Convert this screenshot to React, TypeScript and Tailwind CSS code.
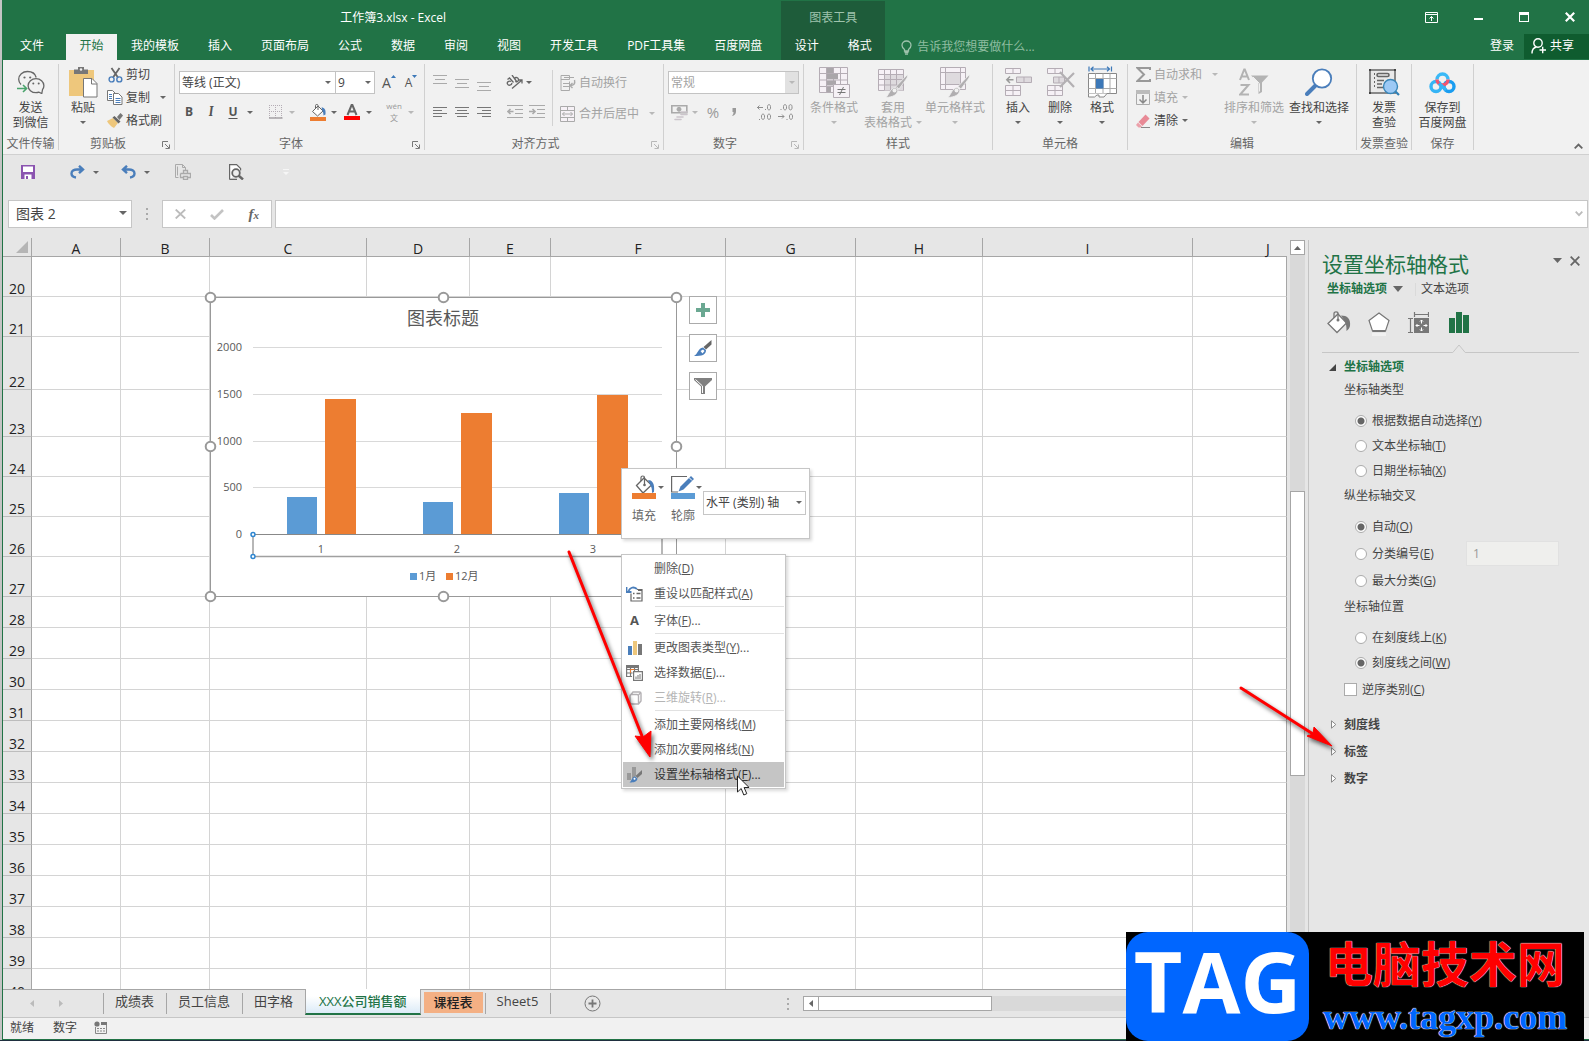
import { useState } from 'react'
import type { ReactNode } from 'react'

const TABS = ['我的模板', '插入', '页面布局', '公式', '数据', '审阅', '视图', '开发工具', 'PDF工具集', '百度网盘']

const COLUMNS = [
  { name: 'A', width: 89 },
  { name: 'B', width: 89 },
  { name: 'C', width: 157 },
  { name: 'D', width: 103 },
  { name: 'E', width: 81 },
  { name: 'F', width: 175 },
  { name: 'G', width: 130 },
  { name: 'H', width: 127 },
  { name: 'I', width: 210 },
]

const ROWS = [
  { n: 20, h: 40 }, { n: 21, h: 40 }, { n: 22, h: 53 }, { n: 23, h: 47 },
  { n: 24, h: 40 }, { n: 25, h: 40 }, { n: 26, h: 40 }, { n: 27, h: 40 },
  { n: 28, h: 31 }, { n: 29, h: 31 }, { n: 30, h: 31 }, { n: 31, h: 31 },
  { n: 32, h: 31 }, { n: 33, h: 31 }, { n: 34, h: 31 }, { n: 35, h: 31 },
  { n: 36, h: 31 }, { n: 37, h: 31 }, { n: 38, h: 31 }, { n: 39, h: 31 },
  { n: 40, h: 31 },
]

const BARS = [
  { x: 87, top: 210, w: 30, fill: '#5b9bd5' },
  { x: 125, top: 112, w: 31, fill: '#ed7d31' },
  { x: 223, top: 215, w: 30, fill: '#5b9bd5' },
  { x: 261, top: 126, w: 31, fill: '#ed7d31' },
  { x: 359, top: 206, w: 30, fill: '#5b9bd5' },
  { x: 397, top: 108, w: 31, fill: '#ed7d31' },
]

/* ---------- small pieces ---------- */

function Caret({ dim, className = '' }: { dim?: boolean; className?: string }) {
  return (
    <svg width="6" height="3" viewBox="0 0 6 3" className={`shrink-0 ${className}`} aria-hidden="true">
      <path d="M0 0h6L3 3z" fill={dim ? '#b8b8b8' : '#666'} />
    </svg>
  )
}

function Sep() {
  return <span className="h-[21px] w-px shrink-0 bg-[#d2d2d2]" />
}

function Tool({ label, w, children, disabled }: { label: string; w: string; children: ReactNode; disabled?: boolean }) {
  return (
    <button aria-label={label} disabled={disabled} className={`flex h-[22px] shrink-0 items-center justify-center ${w}`}>
      {children}
    </button>
  )
}

function Group({ label, width, launcher, dimLauncher, children }: {
  label: string
  width: string
  launcher?: boolean
  dimLauncher?: boolean
  children: ReactNode
}) {
  return (
    <section className={`flex h-[86px] shrink-0 flex-col border-r border-[#d0d0d0] ${width}`}>
      <div className="flex h-[72px]">{children}</div>
      <div className="flex h-[14px] items-end">
        <span className="flex-1 whitespace-nowrap text-center leading-[12px] text-[#666]">{label}</span>
        {launcher && (
          <button aria-label={`${label}设置`} className="flex w-[17px] justify-center pb-px">
            <svg width="8" height="8" viewBox="0 0 8 8" fill="none" stroke={dimLauncher ? '#b8b8b8' : '#777'}>
              <path d="M.5 6V.5H6M3 3l4 4M7.5 3.500v4h-4" />
            </svg>
          </button>
        )}
      </div>
    </section>
  )
}

function Big({ icon, line1, line2, caret, dim, w }: {
  icon: ReactNode
  line1: string
  line2?: string
  caret?: boolean
  dim?: boolean
  w: string
}) {
  return (
    <button disabled={dim} className={`flex shrink-0 flex-col items-center ${w} ${dim ? 'text-[#a3a3a3]' : 'text-[#444]'}`}>
      <span className="flex h-[36px] items-center">{icon}</span>
      <span className="whitespace-nowrap leading-[15px]">{line1}</span>
      <span className="flex h-[15px] items-center gap-1 whitespace-nowrap leading-[15px]">
        {line2}
        {caret && <Caret dim={dim} />}
      </span>
    </button>
  )
}

function Small({ icon, label, caret, dim, gap = 'ml-2' }: {
  icon: ReactNode
  label: string
  caret?: boolean
  dim?: boolean
  gap?: string
}) {
  return (
    <button disabled={dim} className={`flex h-[23px] items-center whitespace-nowrap ${dim ? 'text-[#a3a3a3]' : 'text-[#444]'}`}>
      <span className="mr-[3px] flex w-4 justify-center">{icon}</span>
      {label}
      {caret && <Caret dim={dim} className={gap} />}
    </button>
  )
}

/* ---------- icons ---------- */

function Lines({ rows, color }: { rows: [number, number, number][]; color: string }) {
  return (
    <svg width="14" height="16" viewBox="0 0 14 16" fill={color}>
      {rows.map(([x, y, w]) => <rect key={y} x={x} y={y} width={w} height="1" />)}
    </svg>
  )
}

function WechatIcon() {
  return (
    <svg width="28" height="24" viewBox="0 0 28 24" fill="none" stroke="#666" strokeWidth="1.3">
      <path d="M4 14.500C2.500 13 1.700 11.300 1.700 9.300 1.700 4.900 5.600 1.500 10.500 1.500c4.300 0 7.800 2.500 8.700 6" />
      <path d="M25.500 19.700c.9-1.200 1.400-2.500 1.400-4 0-3.900-3.500-7-7.900-7s-7.900 3.100-7.900 7 3.500 7 7.900 7c1 0 2-.2 2.900-.5l2.900 1.300z" fill="#f1f1f1" />
      <g fill="#666" stroke="none">
        <circle cx="7.500" cy="7.500" r="1.100" /><circle cx="13.200" cy="7.500" r="1.100" />
        <circle cx="16.300" cy="13.500" r="1" /><circle cx="21.700" cy="13.500" r="1" />
      </g>
      <path d="M0 18.500h9M6 15l3.600 3.500L6 22" stroke="#4aa36c" strokeWidth="1.6" />
    </svg>
  )
}

function PasteIcon() {
  return (
    <svg width="30" height="32" viewBox="0 0 30 32">
      <path d="M1 4h25v26H1z" fill="#eec77c" />
      <path d="M6 3.500h4V1h6v2.500h4V8H6z" fill="#777" />
      <circle cx="13" cy="3.500" r="1.200" fill="#f1f1f1" />
      <path d="M15.500 12.500h8.500l5 5v13.500H15.500z" fill="#fff" stroke="#777" />
      <path d="M23.500 12.500v5.500h5.500" fill="none" stroke="#777" />
    </svg>
  )
}

function CutIcon() {
  return (
    <svg width="15" height="16" viewBox="0 0 15 16" fill="none">
      <path d="M3.500 1l6.500 9.500M11.500 1L5 10.500" stroke="#666" strokeWidth="1.800" />
      <circle cx="3.600" cy="12.400" r="2.500" stroke="#4a7ebb" strokeWidth="1.400" />
      <circle cx="11.300" cy="12.400" r="2.500" stroke="#4a7ebb" strokeWidth="1.400" />
    </svg>
  )
}

function CopyIcon() {
  return (
    <svg width="16" height="15" viewBox="0 0 16 15" stroke="#777">
      <path d="M.5.500h5l2.500 2.500v7.500H.5z" fill="#fff" />
      <path d="M6.500 3.500h5l3.500 3.500v7.500H6.500z" fill="#fff" />
      <path d="M2 4.500h3M2 6.500h3M2 8.500h3M8.500 8.500h5M8.500 10.500h5M8.500 12.500h5" stroke="#4a7ebb" />
    </svg>
  )
}

function PainterIcon() {
  return (
    <svg width="16" height="15" viewBox="0 0 16 15">
      <path d="M0 8l6-3 5 5-4 5C4 13.500 1.500 11 0 8z" fill="#eec77c" />
      <path d="M5.500 4.500l2-1.500 6 5.500-2 2z" fill="#666" />
      <path d="M10 4l3.500-4L16 2.500 12.500 7z" fill="#777" />
    </svg>
  )
}

function Bucket() {
  return (
    <svg width="24" height="24" viewBox="0 0 24 24" fill="none">
      <path d="M4.500 10.500L12 3l7.500 7-8.500 8z" fill="#fff" stroke="#666" strokeWidth="1.300" />
      <path d="M9 6V2.500C9 .5 12.500.500 12.500 2.500V10" stroke="#666" strokeWidth="1.200" />
      <circle cx="12.500" cy="10" r="1.300" fill="#666" />
      <path d="M16 5c4 0 7 3 6 12l-2 1c0-4-.5-6-1.500-7.500z" fill="#4a7ebb" />
      <rect y="18" width="24" height="6" fill="#ed7d31" />
    </svg>
  )
}

function PaneBucket() {
  return (
    <svg width="24" height="23" viewBox="0 0 24 23" fill="none">
      <path d="M1 12.500L11 3l8.500 9-9.500 9.500z" fill="#fff" stroke="#777" strokeWidth="1.300" />
      <path d="M7 7V2.500C7 .3 11 .3 11 2.500V9" stroke="#777" strokeWidth="1.300" />
      <circle cx="11" cy="9" r="1.500" fill="#777" />
      <path d="M14 4.500c6 0 10 3 9 10.500-.5 2-2 4-3.500 5 0-5-.5-7.500-1.500-9.500z" fill="#777" />
    </svg>
  )
}

function MiniBucket() {
  return (
    <svg width="16" height="17" viewBox="0 0 16 17" fill="none">
      <path d="M2.500 7.500L8 2l5 5-5.500 5z" fill="#fff" stroke="#666" />
      <path d="M5.500 5V1.500c0-1.500 2.500-1.500 2.500 0V6" stroke="#666" />
      <path d="M11.500 3.500c3 0 4.500 2 4 7l-2 1c0-2-.3-3-1-4.500z" fill="#4a7ebb" />
      <rect y="13" width="16" height="4" fill="#ed7d31" />
    </svg>
  )
}

function CondIcon() {
  return (
    <svg width="31" height="31" viewBox="0 0 31 31" fill="none" stroke="#b5adb5">
      <path d="M.5.500h28v25H.5z" fill="#f6f1f6" />
      <path d="M7.500.500v25M14.500.500v25M21.500.500v25M.5 6.500h28M.5 13h28M.5 19.500h28" />
      <path d="M8 1h6v5H8zM8 7h11v5H8zM8 13.500h9v5H8zM8 20h4v5H8z" fill="#aaa6aa" stroke="none" />
      <path d="M14.500 17.500h16v13h-16z" fill="#f6f1f6" />
      <path d="M18.500 22.500h8M18.500 25.500h8M24.500 20l-4 8" stroke="#777" />
    </svg>
  )
}

function BrushOver() {
  return (
    <>
      <path d="M30 7l-1 4-8 11-3-2.500z" fill="#b0aeb0" stroke="#f1f1f1" strokeWidth=".8" />
      <path d="M17 20.500l3 2.500c-1 5-5 7-12 7.500 3-3 4-9 9-10z" fill="#b0aeb0" stroke="#f1f1f1" strokeWidth=".8" />
      <circle cx="16.500" cy="23.500" r="2" fill="#f1f1f1" stroke="none" />
    </>
  )
}

function TableStyleIcon() {
  return (
    <svg width="31" height="31" viewBox="0 0 31 31" fill="none" stroke="#b5adb5">
      <path d="M.5 2.500h25v21H.5z" fill="#f6f1f6" />
      <path d="M6 7.500h19v16H6z" fill="#dedade" stroke="none" />
      <path d="M6.500 2.500v21M12.500 2.500v21M18.500 2.500v21M.5 7.500h25M.5 12.500h25M.5 18h25" />
      <BrushOver />
    </svg>
  )
}

function CellStyleIcon() {
  return (
    <svg width="31" height="31" viewBox="0 0 31 31" fill="none" stroke="#b5adb5">
      <path d="M.5.500h25v22H.5z" fill="#f6f1f6" />
      <path d="M5.500 5.500h15v12h-15z" fill="#dedade" />
      <path d="M5.500.500v22M20.500.500v22M.5 5.500h25M.5 17.500h25" />
      <BrushOver />
    </svg>
  )
}

function CellsIcon({ remove }: { remove?: boolean }) {
  return (
    <svg width="30" height="30" viewBox="0 0 30 30" fill="none" stroke="#b5adb5">
      <path d="M2.500 1.500h15v5h-15zM10 1.500v5" fill="#f6f1f6" />
      <path d="M2.500 18.500h15v10h-15zM10 18.500v10M2.500 23.500h15" fill="#f6f1f6" />
      {remove ? (
        <>
          <path d="M8.500 10h11v6h-11zM14 10v6" fill="#dedade" />
          <path d="M15 5l14 15M29 6L15 20" stroke="#b3b0b3" strokeWidth="2.200" />
        </>
      ) : (
        <>
          <path d="M13.500 10h15v5.500h-15zM21 10v5.500" fill="#dedade" />
          <path d="M10.500 12.700H4M7 9.500l-3.200 3.200L7 16" stroke="#999" strokeWidth="1.500" />
        </>
      )}
    </svg>
  )
}

function FormatIcon() {
  return (
    <svg width="29" height="32" viewBox="0 0 29 32" fill="none">
      <path d="M1 .500v5M23.500.500v5M3 3h18.500M5.500.800L3 3l2.500 2.200M19 .800L21.500 3 19 5.200" stroke="#3c78b8" strokeWidth="1.200" />
      <path d="M.5 7.500h28v20H.5z" fill="#fff" stroke="#888" />
      <path d="M7.500 7.500v20M15 7.500v20M22 7.500v20M.5 12.500h28M.5 22.500h28" stroke="#aaa" />
      <path d="M8 13h7.500v9.500H8z" fill="#3c78b8" />
      <path d="M.5 27.500v3.500h6l2.500-2h2v2h5l3-3.500" fill="#fff" stroke="#888" />
    </svg>
  )
}

function SortIcon() {
  return (
    <svg width="30" height="29" viewBox="0 0 30 29" fill="none" stroke="#b3b3b3" strokeWidth="2">
      <path d="M1 12L5.200 1.500h.6L10 12M2.500 8.500h6M1.500 17h8L1.200 26.500H10" />
      <path d="M12 7.500h17.500l-6.500 7v9.500l-3.500 2v-11.500z" fill="#b3b3b3" stroke="none" />
      <path d="M14 9l6.500 6.500v8" stroke="#f1f1f1" strokeWidth="1" />
    </svg>
  )
}

function FindIcon() {
  return (
    <svg width="28" height="28" viewBox="0 0 28 28" fill="none">
      <path d="M10.500 17.500L2 26" stroke="#4a7ebb" strokeWidth="4" strokeLinecap="round" />
      <circle cx="17" cy="10.500" r="9.200" fill="#fff" stroke="#4a7ebb" strokeWidth="1.800" />
    </svg>
  )
}

function InvoiceIcon() {
  return (
    <svg width="32" height="28" viewBox="0 0 32 28" fill="none" stroke="#666">
      <path d="M2 2h25v23H2z" fill="#e9e9e9" strokeWidth="2" stroke="#888" />
      <path d="M1 1h2v2H1zM26 1h2v2h-2zM1 24h2v2H1z" fill="#444" stroke="none" />
      <path d="M6.500 5v16" strokeDasharray="2 2" />
      <rect x="9" y="5.500" width="12" height="3" rx="1.500" strokeWidth="1.600" />
      <path d="M9 12.500h7M9 16h5M9 19.500h6" strokeWidth="1.500" />
      <path d="M27.500 23.500l3.500 3.500" stroke="#2f7fb5" strokeWidth="2.200" />
      <circle cx="22.500" cy="18.500" r="7" fill="#9cc9f5" stroke="#3a86b8" strokeWidth="1.400" />
    </svg>
  )
}

function BaiduIcon() {
  return (
    <svg width="27" height="23" viewBox="0 0 27 23" fill="none" strokeWidth="3.400">
      <circle cx="7" cy="15.500" r="5" stroke="#35b4f5" />
      <circle cx="20" cy="15.500" r="5" stroke="#1a9df0" />
      <path d="M8 8.500a5.500 5.500 0 1 1 11 0" stroke="#3ab9f7" />
      <path d="M8 8.500a5.500 5.500 0 1 0 11 0" stroke="#f2546f" />
      <path d="M10 12.500l7 6.500" stroke="#35b4f5" />
    </svg>
  )
}

function WrapIcon() {
  return (
    <svg width="16" height="16" viewBox="0 0 16 16" fill="none" stroke="#aaa">
      <path d="M1 .5v15M1 .500h8.500v4H1M4 2.500h10M3 8.500h6M3 11.500h6M1 15.500h8.500v-9" />
      <path d="M14.500 5c1 4-1 5.500-4 5.500M12.500 8l-2.500 2.500 2.500 2.500" strokeWidth="1.400" />
    </svg>
  )
}

function MergeIcon() {
  return (
    <svg width="16" height="16" viewBox="0 0 16 16" fill="none" stroke="#aaa">
      <path d="M.5.500h14v15H.5zM.5 4.500h14M.5 11.500h14M7.500.500v4M7.500 11.500v4" fill="#f6f1f6" />
      <path d="M2.500 8h10M4.500 6l-2 2 2 2M10.500 6l2 2-2 2" />
    </svg>
  )
}

function IndentIcon({ right }: { right?: boolean }) {
  return (
    <svg width="16" height="14" viewBox="0 0 16 14" fill="none" stroke="#aaa">
      <path d="M0 .500h16M8 4.500h8M8 8.500h8M0 12.500h16" />
      {right
        ? <path d="M0 6.500h6M3.500 4L6 6.500 3.500 9" strokeWidth="1.600" />
        : <path d="M6.500 6.500h-6M3.500 4L1 6.500 3.500 9" strokeWidth="1.600" />}
    </svg>
  )
}

function MoneyIcon() {
  return (
    <svg width="17" height="17" viewBox="0 0 17 17" fill="none" stroke="#aaa">
      <path d="M.8 1.800h15v7H.8z" strokeWidth="1.600" />
      <circle cx="8" cy="5.300" r="2" fill="#aaa" />
      <path d="M10 8h6M10 10.500h6M6 13h6M4 15.500h6" stroke="#ccc5cc" strokeWidth="1.600" strokeLinecap="round" />
    </svg>
  )
}

function DecimalIcon({ less }: { less?: boolean }) {
  return (
    <svg width="16" height="16" viewBox="0 0 16 16" fill="none" stroke="#8e8e8e">
      {less ? (
        <>
          <path d="M2.500 5.500h1M5.500 2.500c0-2.500 3-2.500 3 0v1.500c0 2.500-3 2.500-3 0zM11 2.500c0-2.500 3-2.500 3 0v1.500c0 2.500-3 2.500-3 0z" />
          <path d="M0 12.500h6M4 10.500l2 2-2 2M8.500 15.500h1M11.500 12c0-2.500 3-2.500 3 0v1.500c0 2.500-3 2.500-3 0z" />
        </>
      ) : (
        <>
          <path d="M7 3.500H1M3.500 1.500l-2 2 2 2M9 5.500h1M11.500 2.500c0-2.500 3-2.500 3 0v1.500c0 2.500-3 2.500-3 0z" />
          <path d="M3 15.500h1M5.500 12c0-2.500 3-2.500 3 0v1.500c0 2.500-3 2.500-3 0zM11.500 12c0-2.500 3-2.500 3 0v1.500c0 2.500-3 2.500-3 0z" />
        </>
      )}
    </svg>
  )
}

/* ---------- title bar and ribbon ---------- */

function TitleBar() {
  return (
    <header className="flex h-[60px] bg-[#217346] text-white">
      <div className="flex flex-col pr-1">
        <div className="flex h-[34px] items-center justify-center pl-[6px] pt-px leading-none">工作簿3.xlsx - Excel</div>
        <nav className="flex h-[26px]">
          <button className="w-[63px] pb-[3px] pr-[5px]">文件</button>
          <button className="w-[51px] bg-[#f1f1f1] pb-[3px] text-[#217346]">开始</button>
          {TABS.map((t) => (
            <button key={t} className="mr-px whitespace-nowrap px-[14px] pb-[3px]">{t}</button>
          ))}
        </nav>
      </div>
      <div className="mt-px flex w-[104px] flex-col bg-[#1e5c3a]">
        <div className="flex h-[33px] items-center justify-center text-[#9fc3ad]">图表工具</div>
        <div className="flex h-[26px] justify-center gap-[29px] pb-[3px]">
          <button>设计</button>
          <button>格式</button>
        </div>
      </div>
      <button className="mt-[35px] flex h-[24px] items-center whitespace-nowrap pl-4 text-[#8fbda1]">
        <svg width="11" height="15" viewBox="0 0 11 15" fill="none" stroke="#9fc3ad" strokeWidth="1.300" className="mr-[5px]">
          <path d="M3.500 11V9.500C2 8.500 1 7 1 5.300 1 2.800 3 1 5.500 1S10 2.800 10 5.300C10 7 9 8.500 7.500 9.500V11zM3.500 12.500h4M4 14.200h3" />
        </svg>
        告诉我您想要做什么...
      </button>
      <div className="ml-auto flex flex-col">
        <div className="flex h-[34px] items-center justify-end gap-[36px] pr-[14px]">
          <button aria-label="功能区显示选项">
            <svg width="13" height="11" viewBox="0 0 13 11" fill="none" stroke="#fff">
              <path d="M.5.500h12v10H.5zM.5 2.500h12M6.500 9V4.500M4.500 6.500l2-2 2 2" />
            </svg>
          </button>
          <button aria-label="最小化" className="pt-1"><span className="block h-[2px] w-[9px] bg-white" /></button>
          <button aria-label="最大化"><span className="block h-[10px] w-[10px] border border-t-[3px] border-white" /></button>
          <button aria-label="关闭">
            <svg width="10" height="10" viewBox="0 0 10 10" stroke="#fff" strokeWidth="2.200"><path d="M.8.800l8.400 8.400M9.200.800L.8 9.200" /></svg>
          </button>
        </div>
        <div className="flex h-[25px] justify-end">
          <button className="px-[10px] pb-[2px]">登录</button>
          <button className="flex w-[65px] items-center gap-1 bg-[#0f5c2f] pb-[2px] pl-[7px]">
            <svg width="15" height="16" viewBox="0 0 15 16" fill="none" stroke="#fff" strokeWidth="1.400">
              <circle cx="7" cy="5" r="4.200" /><path d="M1 15.500c0-3.500 2-6 4.500-6.500M8.500 12h6.500M11.700 8.800v6.500" />
            </svg>
            共享
          </button>
        </div>
      </div>
    </header>
  )
}

function Ribbon() {
  return (
    <div className="flex border-b border-[#d0d0d0] bg-[#f1f1f1] py-1">
      <Group label="文件传输" width="w-[56px]">
        <Big w="w-full" icon={<WechatIcon />} line1="发送" line2="到微信" />
      </Group>

      <Group label="剪贴板" width="w-[116px]" launcher>
        <div className="ml-[3px] mr-[3px]"><Big w="w-[42px]" icon={<PasteIcon />} line1="粘贴" caret /></div>
        <div className="-mt-px flex flex-col">
          <Small icon={<CutIcon />} label="剪切" />
          <Small icon={<CopyIcon />} label="复制" caret gap="ml-[10px]" />
          <Small icon={<PainterIcon />} label="格式刷" />
        </div>
      </Group>

      <Group label="字体" width="w-[250px]" launcher>
        <div className="flex flex-col gap-[7px] pt-[7px]">
          <div className="flex h-[23px] items-center pl-1">
            <div className="relative">
              <select aria-label="字体" className="block h-[23px] w-[157px] appearance-none border border-[#c3c3c3] bg-white px-[2px] text-[#444]">
                <option>等线 (正文)</option>
              </select>
              <Caret className="pointer-events-none absolute right-[5px] top-[10px]" />
            </div>
            <div className="relative -ml-px">
              <select aria-label="字号" className="block h-[23px] w-[40px] appearance-none border border-[#c3c3c3] bg-white px-[2px] text-[#444]">
                <option>9</option>
              </select>
              <Caret className="pointer-events-none absolute right-[4px] top-[10px]" />
            </div>
            <button aria-label="增大字号" className="ml-[7px] flex items-start text-[14px] font-medium leading-[23px] text-[#555]">
              A<svg width="5" height="4" viewBox="0 0 5 4" className="mt-1"><path d="M0 3h5L2.500 0z" fill="#3c78b8" /></svg>
            </button>
            <button aria-label="减小字号" className="ml-[9px] flex items-start text-[12px] font-medium leading-[24px] text-[#555]">
              A<svg width="5" height="4" viewBox="0 0 5 4" className="mt-1"><path d="M0 0h5L2.500 3z" fill="#3c78b8" /></svg>
            </button>
          </div>
          <div className="flex h-[22px] items-center pl-[3px]">
            <button className="w-[22px] font-bold text-[#555]">B</button>
            <button className="w-[22px] font-serif text-[13px] font-bold italic text-[#555]">I</button>
            <button className="w-[22px] font-bold text-[#555] underline underline-offset-2">U</button>
            <Tool label="下划线选项" w="w-[12px]"><Caret /></Tool>
            <span className="mx-[5px]"><Sep /></span>
            <Tool label="边框" w="w-[20px]" disabled>
              <svg width="14" height="14" viewBox="0 0 14 14" fill="none" stroke="#b5adb5">
                <path d="M.5 0v13M6.500 0v13M12.500 0v13M0 .500h13M0 6.500h13" strokeDasharray="1 1" /><path d="M0 13h13.500" strokeWidth="1.500" stroke="#a5a0a5" />
              </svg>
            </Tool>
            <Tool label="边框选项" w="w-[12px]" disabled><Caret dim /></Tool>
            <span className="mx-[5px]"><Sep /></span>
            <Tool label="填充颜色" w="w-[20px]"><MiniBucket /></Tool>
            <Tool label="填充颜色选项" w="w-[12px]"><Caret /></Tool>
            <Tool label="字体颜色" w="w-[24px]">
              <svg width="16" height="16" viewBox="0 0 16 16" fill="none">
                <path d="M3.500 11L7.600 1h.8l4.100 10M5 7.500h6" stroke="#666" strokeWidth="2" /><rect y="12" width="16" height="4" fill="#f00" />
              </svg>
            </Tool>
            <Tool label="字体颜色选项" w="w-[10px]"><Caret /></Tool>
            <span className="mx-[5px]"><Sep /></span>
            <button disabled className="flex w-[20px] flex-col items-center text-[8px] leading-[12px] text-[#999]">
              <span>wén</span>
              <span>文</span>
            </button>
            <Tool label="拼音选项" w="w-[14px]" disabled><Caret dim /></Tool>
          </div>
        </div>
      </Group>

      <Group label="对齐方式" width="w-[239px]" launcher dimLauncher>
        <div className="flex w-[127px] flex-col gap-[7px] pl-1 pt-[7px]">
          <div className="flex h-[23px] items-center">
            <Tool label="顶端对齐" w="w-[22px]"><Lines color="#aaa" rows={[[0, 0, 14], [2, 4, 10], [0, 8, 14]]} /></Tool>
            <Tool label="垂直居中" w="w-[22px]"><Lines color="#aaa" rows={[[0, 4, 14], [2, 8, 10], [0, 12, 14]]} /></Tool>
            <Tool label="底端对齐" w="w-[22px]"><Lines color="#aaa" rows={[[0, 7, 14], [2, 11, 10], [0, 15, 14]]} /></Tool>
            <span className="ml-1 mr-[5px]"><Sep /></span>
            <Tool label="方向" w="w-[20px]">
              <svg width="17" height="15" viewBox="0 0 17 15" fill="none" stroke="#666" strokeWidth="1.300">
                <path d="M1.500 4.500l2-1.500 4 4.500M5 6.500C3 5.500.5 7 1.500 9s4 1.500 4.500-1M6 0l5 7M8.500 3.500c1.500-2 4-.5 4 1.200S10 8 9.500 6M6 13.500L16 5M16 8.500V5h-4" />
              </svg>
            </Tool>
            <Tool label="方向选项" w="w-[10px]"><Caret /></Tool>
          </div>
          <div className="flex h-[22px] items-center">
            <Tool label="左对齐" w="w-[22px]"><Lines color="#777" rows={[[0, 3, 14], [0, 6, 9], [0, 9, 14], [0, 12, 9]]} /></Tool>
            <Tool label="居中" w="w-[22px]"><Lines color="#777" rows={[[0, 3, 14], [2, 6, 10], [0, 9, 14], [2, 12, 10]]} /></Tool>
            <Tool label="右对齐" w="w-[22px]"><Lines color="#777" rows={[[0, 3, 14], [5, 6, 9], [0, 9, 14], [5, 12, 9]]} /></Tool>
            <span className="ml-1 mr-[5px]"><Sep /></span>
            <Tool label="减少缩进量" w="w-[22px]" disabled><IndentIcon /></Tool>
            <Tool label="增加缩进量" w="w-[22px]" disabled><IndentIcon right /></Tool>
          </div>
        </div>
        <div className="mt-[6px] flex h-[56px] flex-1 flex-col gap-[8px] border-l border-[#d2d2d2] pl-[7px] pt-px">
          <Small icon={<WrapIcon />} label="自动换行" dim />
          <Small icon={<MergeIcon />} label="合并后居中" dim caret gap="ml-[10px]" />
        </div>
      </Group>

      <Group label="数字" width="w-[140px]" launcher dimLauncher>
        <div className="flex flex-col gap-[7px] pl-1 pt-[7px]">
          <div className="relative">
            <select aria-label="数字格式" disabled className="block h-[23px] w-[131px] appearance-none border border-[#c3c3c3] bg-white px-[2px] text-[#a3a3a3] opacity-100">
              <option>常规</option>
            </select>
            <span className="pointer-events-none absolute right-px top-px flex h-[21px] w-[13px] items-center justify-center bg-[#e1e1e1]"><Caret dim /></span>
          </div>
          <div className="flex h-[22px] items-center text-[#999]">
            <Tool label="会计数字格式" w="w-[22px]" disabled><MoneyIcon /></Tool>
            <Tool label="会计选项" w="w-[10px]" disabled><Caret dim /></Tool>
            <button disabled className="w-[26px] text-[15px]">%</button>
            <Tool label="千位分隔" w="w-[16px]" disabled>
              <svg width="6" height="8" viewBox="0 0 6 8"><path d="M1.500 0h3.500v3.500C5 6 3.500 7.500 1 8c1-1.200 1.500-2.200 1.500-4h-1z" fill="#999" /></svg>
            </Tool>
            <span className="ml-2 mr-[3px]"><Sep /></span>
            <Tool label="增加小数位数" w="w-[22px]" disabled><DecimalIcon /></Tool>
            <Tool label="减少小数位数" w="w-[22px]" disabled><DecimalIcon less /></Tool>
          </div>
        </div>
      </Group>

      <Group label="样式" width="w-[189px]">
        <Big w="w-[60px]" icon={<CondIcon />} line1="条件格式" caret dim />
        <Big w="w-[58px]" icon={<TableStyleIcon />} line1="套用" line2="表格格式" caret dim />
        <Big w="w-[66px]" icon={<CellStyleIcon />} line1="单元格样式" caret dim />
      </Group>

      <Group label="单元格" width="w-[135px]">
        <div className="flex pl-1">
          <Big w="w-[42px]" icon={<CellsIcon />} line1="插入" caret />
          <Big w="w-[42px]" icon={<CellsIcon remove />} line1="删除" caret />
          <Big w="w-[42px]" icon={<FormatIcon />} line1="格式" caret />
        </div>
      </Group>

      <Group label="编辑" width="w-[229px]">
        <div className="-mt-px flex w-[93px] flex-col pl-[7px]">
          <Small
            icon={<svg width="15" height="15" viewBox="0 0 15 15" fill="none" stroke="#999" strokeWidth="2"><path d="M14 3V1H1.500L8 7.500 1.500 14H14v-2" /></svg>}
            label="自动求和" dim caret gap="ml-[10px]"
          />
          <Small
            icon={<svg width="14" height="15" viewBox="0 0 14 15" fill="none" stroke="#aaa"><path d="M.5.500h13v14H.5z" /><path d="M0 0h14v4H0z" fill="#bbb" stroke="none" /><path d="M7 5v8M3.500 9.500L7 13l3.500-3.500" stroke="#888" strokeWidth="1.500" /></svg>}
            label="填充" dim caret gap="ml-1"
          />
          <Small
            icon={<svg width="14" height="14" viewBox="0 0 14 14"><path d="M9.500.500l4 4L6.500 12 2.500 8z" fill="#e88a96" /><path d="M2 8.500l4 4-1.500 1H2.500L0 11z" fill="#eba0aa" /><path d="M5 13.500h9" stroke="#888" /></svg>}
            label="清除" caret gap="ml-1"
          />
        </div>
        <Big w="w-[66px]" icon={<SortIcon />} line1="排序和筛选" caret dim />
        <Big w="w-[64px]" icon={<FindIcon />} line1="查找和选择" caret />
      </Group>

      <Group label="发票查验" width="w-[55px]">
        <Big w="w-full" icon={<InvoiceIcon />} line1="发票" line2="查验" />
      </Group>
      <Group label="保存" width="w-[62px]">
        <Big w="w-full" icon={<BaiduIcon />} line1="保存到" line2="百度网盘" />
      </Group>
      <button aria-label="折叠功能区" className="ml-auto mr-[6px] self-end pb-px">
        <svg width="9" height="6" viewBox="0 0 9 6" fill="none" stroke="#666" strokeWidth="1.800"><path d="M.7 5.300L4.500 1.500l3.800 3.800" /></svg>
      </button>
    </div>
  )
}

function QuickAccess() {
  return (
    <div className="flex h-[34px] items-center pl-[18px]">
      <button aria-label="保存">
        <svg width="14" height="14" viewBox="0 0 14 14"><path d="M0 0h14v14H0z" fill="#8b54b0" /><path d="M2 1.500h10V7H2zM3.500 9.500h7V14h-7z" fill="#fff" /><path d="M5 11h2v3H5z" fill="#8b54b0" /></svg>
      </button>
      <button aria-label="重做" className="ml-[35px]">
        <svg width="15" height="14" viewBox="0 0 15 14" fill="none" stroke="#4a7ebb" strokeWidth="2.400"><path d="M6 12.500C2.500 12 1.500 10 1.500 8.500c0-3 3-4 5.500-4h5.500M9 .800l4 3.700-4 3.700" /></svg>
      </button>
      <Caret className="ml-[8px]" />
      <button aria-label="撤消" className="ml-[22px]">
        <svg width="15" height="14" viewBox="0 0 15 14" fill="none" stroke="#4a7ebb" strokeWidth="2.400"><path d="M9 12.500c3.500-.5 4.500-2.500 4.500-4 0-3-3-4-5.500-4H2.500M6 .800L2 4.500l4 3.700" /></svg>
      </button>
      <Caret className="ml-[8px]" />
      <button aria-label="快速打印" disabled className="ml-[25px]">
        <svg width="16" height="16" viewBox="0 0 16 16" fill="none" stroke="#aaa"><path d="M3.500 13.500h-3V.500h7l3 3V6" /><path d="M7.500.500v3h3M2.500 2.500v9" /><path d="M8.500 9V6.500h4V9M5.500 9.500h10v4h-2.500M5.500 9.500v4H8M8.500 12.500h4v3h-4z" strokeWidth="1.300" /></svg>
      </button>
      <button aria-label="打印预览" className="ml-[38px]">
        <svg width="15" height="16" viewBox="0 0 15 16" fill="none" stroke="#666"><path d="M.6 15.400V.600h7l4 4v2M.6 15.400H8" fill="#fff" strokeWidth="1.200" /><circle cx="7" cy="9" r="3.800" strokeWidth="1.800" fill="#eee" /><path d="M9.500 11.500l4.500 4" strokeWidth="2.400" /></svg>
      </button>
      <svg width="6" height="6" viewBox="0 0 6 6" className="ml-[39px]"><path d="M0 0h6v1H0zM0 3h6L3 6z" fill="#f6f6f6" /></svg>
    </div>
  )
}

function FormulaBar() {
  return (
    <div className="flex pb-[10px] pl-[5px] pr-px pt-[11px]">
      <div className="relative">
        <input aria-label="名称框" defaultValue="图表 2" className="block h-[28px] w-[124px] border border-[#c6c6c6] bg-white pb-[2px] pl-[7px] text-[14px] text-[#444]" />
        <svg width="8" height="4" viewBox="0 0 8 4" className="absolute right-[5px] top-[11px]"><path d="M0 0h8L4 4z" fill="#666" /></svg>
      </div>
      <div className="flex w-[30px] flex-col items-center justify-center gap-[3px]">
        <i className="size-[2px] bg-[#aaa]" /><i className="size-[2px] bg-[#aaa]" /><i className="size-[2px] bg-[#aaa]" />
      </div>
      <div className="flex h-[28px] w-[110px] items-center justify-between border border-[#c6c6c6] bg-white px-[12px]">
        <button aria-label="取消" disabled>
          <svg width="11" height="10" viewBox="0 0 11 10" stroke="#bbb" strokeWidth="1.800"><path d="M.7.500l9.500 9M10.200.500L.7 9.500" /></svg>
        </button>
        <button aria-label="输入" disabled>
          <svg width="14" height="11" viewBox="0 0 14 11" fill="none" stroke="#c3c3c3" strokeWidth="2.600"><path d="M1 6l3.500 3.500L13 1" /></svg>
        </button>
        <button className="font-['Liberation_Serif',serif] text-[15px] font-bold italic leading-none text-[#666]">f<span className="text-[11px]">x</span></button>
      </div>
      <div className="relative ml-[3px] flex-1">
        <input aria-label="编辑栏" className="block h-[28px] w-full border border-[#c6c6c6] bg-white px-2" />
        <svg width="8" height="6" viewBox="0 0 8 6" fill="none" stroke="#bbb" strokeWidth="1.800" className="absolute right-[5px] top-[11px]"><path d="M.7.700L4 4.200 7.300.700" /></svg>
      </div>
    </div>
  )
}

/* ---------- sheet ---------- */

function Grid() {
  return (
    <table className="w-full table-fixed border-separate border-spacing-0 text-[#222]">
      <colgroup>
        <col className="w-[29px]" />
        {COLUMNS.map((c) => <col key={c.name} style={{ width: c.width }} />)}
        <col />
      </colgroup>
      <thead>
        <tr className="h-[19px] text-[14px] leading-[14px]">
          <th className="border-b border-r border-[#a6a6a6] p-0" aria-label="全选">
            <svg width="12" height="12" viewBox="0 0 12 12" className="ml-auto mr-[3px]"><path d="M12 0v12H0z" fill="#b5b5b5" /></svg>
          </th>
          {COLUMNS.map((c) => (
            <th key={c.name} className="border-b border-r border-[#a6a6a6] p-0 pt-[3px] font-normal">{c.name}</th>
          ))}
          <th className="border-b border-[#a6a6a6] p-0 pl-[56px] pt-[3px] font-normal">J</th>
        </tr>
      </thead>
      <tbody>
        {ROWS.map((r) => (
          <tr key={r.n} style={{ height: r.h }}>
            <th className="border-b border-r border-b-[#bdbdbd] border-r-[#a6a6a6] p-0 pr-[6px] text-right align-bottom text-[14px] font-normal leading-[15px]">{r.n}</th>
            {COLUMNS.map((c) => <td key={c.name} className="border-b border-r border-[#d4d4d4] bg-white p-0" />)}
            <td className="border-b border-r border-[#d4d4d4] border-r-[#a6a6a6] bg-white p-0" />
          </tr>
        ))}
      </tbody>
    </table>
  )
}

function Chart() {
  const grid = [{ y: 60, v: '2000' }, { y: 107, v: '1500' }, { y: 154, v: '1000' }, { y: 200, v: '500' }, { y: 247, v: '0' }]
  const handles = [[10, 10], [243, 10], [476, 10], [10, 159], [476, 159], [10, 309], [243, 309]]
  return (
    <svg width="490" height="320" viewBox="0 0 490 320" className="absolute left-[197px] top-[49px]" fontSize="11" fill="#595959" role="img" aria-label="图表标题">
      <rect x="10.500" y="10.500" width="466" height="299" fill="#fff" stroke="#999" />
      <text x="243" y="38" fontSize="18" textAnchor="middle">图表标题</text>
      {grid.map((g) => (
        <g key={g.v}>
          <path d={`M53 ${g.y + 0.5}h409`} stroke={g.v === '0' ? '#888' : '#d9d9d9'} />
          <text x="42" y={g.y + 4} textAnchor="end">{g.v}</text>
        </g>
      ))}
      {BARS.map((b) => <rect key={b.x} x={b.x} y={b.top} width={b.w} height={247 - b.top} fill={b.fill} />)}
      <path d="M53 247.500v22h409v-22" fill="none" stroke="#a0a0a0" strokeWidth="1.500" />
      <text x="121" y="266" textAnchor="middle">1</text>
      <text x="257" y="266" textAnchor="middle">2</text>
      <text x="393" y="266" textAnchor="middle">3</text>
      <rect x="210" y="286" width="7" height="7" fill="#5b9bd5" />
      <text x="219" y="293">1月</text>
      <rect x="246" y="286" width="7" height="7" fill="#ed7d31" />
      <text x="255" y="293">12月</text>
      {handles.map(([x, y]) => <circle key={`${x}-${y}`} cx={x + 0.5} cy={y + 0.5} r="4.800" fill="#fff" stroke="#999" strokeWidth="2" />)}
      <circle cx="53" cy="247.500" r="2" fill="#fff" stroke="#2e86d1" strokeWidth="1.500" />
      <circle cx="53" cy="269.500" r="2" fill="#fff" stroke="#2e86d1" strokeWidth="1.500" />
    </svg>
  )
}

function ChartButtons() {
  const box = 'flex size-[28px] items-center justify-center border border-[#ababab] bg-white'
  return (
    <div className="absolute left-[686px] top-[58px] flex flex-col gap-[10px]">
      <button aria-label="图表元素" className={box}>
        <svg width="14" height="14" viewBox="0 0 14 14" fill="#6ba892"><path d="M5 0h4v5h5v4H9v5H5V9H0V5h5z" /></svg>
      </button>
      <button aria-label="图表样式" className={box}>
        <svg width="20" height="20" viewBox="0 0 20 20" fill="none">
          <path d="M18.500 2v4.500l-5.500 5-2.500-2.500z" fill="#666" /><path d="M10 9.500l3 2.500c0 5-4 6-12 6 4-2 4-8 9-8.500z" fill="#4a7ebb" /><path d="M7.500 13l2.500-1.500 1.500 1.500-2 2.500" fill="#fff" />
        </svg>
      </button>
      <button aria-label="图表筛选器" className={box}>
        <svg width="18" height="17" viewBox="0 0 18 17"><path d="M0 0h18v2l-7 6.500V16H7V8.500L0 2z" fill="#808080" /><path d="M1.500 1.500L8.500 8v7" stroke="#fff" fill="none" /></svg>
      </button>
    </div>
  )
}

function MiniToolbar() {
  return (
    <div className="absolute left-[618px] top-[230px] flex h-[71px] w-[189px] border border-[#c6c6c6] bg-white text-[#444] shadow-[2px_2px_3px_rgba(0,0,0,0.15)]">
      <button className="ml-[10px] mt-[6px] flex flex-col items-start gap-2 text-[#666]">
        <span className="flex items-center gap-[2px]"><Bucket /><Caret /></span>
        <span className="leading-[18px]">填充</span>
      </button>
      <button className="ml-[7px] mt-[6px] flex flex-col items-start gap-2 text-[#666]">
        <span className="flex items-center gap-px">
          <svg width="24" height="24" viewBox="0 0 24 24" fill="none">
            <path d="M16 1.500H.600v15.500H7" stroke="#666" strokeWidth="1.200" /><path d="M7.500 16.500l2-5L20 1l3 3-10.500 10.500z" fill="#4a7ebb" /><path d="M18 2.500l3 3" stroke="#fff" /><rect y="18" width="24" height="6" fill="#5b9bd5" />
          </svg>
          <Caret />
        </span>
        <span className="leading-[18px]">轮廓</span>
      </button>
      <div className="relative ml-px mt-[22px]">
        <select aria-label="图表元素" className="block h-[24px] w-[103px] appearance-none border border-[#c6c6c6] bg-white px-[2px]">
          <option>水平 (类别) 轴</option>
        </select>
        <Caret className="pointer-events-none absolute right-[4px] top-[10px]" />
      </div>
    </div>
  )
}

function MenuItem({ icon, text, k, tail = '', state }: { icon?: ReactNode; text: string; k: string; tail?: string; state?: 'off' | 'on' }) {
  return (
    <button
      disabled={state === 'off'}
      className={`mx-px flex h-[25px] items-center whitespace-nowrap ${state === 'off' ? 'text-[#b5b5b5]' : state === 'on' ? 'bg-[#c5c5c5] text-[#333]' : 'text-[#555]'}`}
    >
      <span className="mr-[9px] flex w-[22px] justify-end pr-[2px]">{icon}</span>
      <span>{text}(<u>{k}</u>){tail}</span>
    </button>
  )
}

function ContextMenu() {
  const rule = <span className="ml-[33px] mr-px h-[2px] border-t border-[#e1e1e1]" />
  return (
    <div className="absolute left-[618px] top-[316px] flex w-[165px] flex-col border border-[#c6c6c6] bg-white py-px shadow-[2px_2px_3px_rgba(0,0,0,0.15)]">
      <MenuItem text="删除" k="D" />
      <MenuItem
        text="重设以匹配样式" k="A"
        icon={<svg width="17" height="16" viewBox="0 0 17 16" fill="none"><path d="M5 7.500v7.500h11V3.500h-5" stroke="#666" strokeWidth="1.200" /><path d="M12 3h4v2h-4z" fill="#666" /><path d="M10.500 7.500h4M10.500 12h4M7 7.500h1.500M7 12h1.500" stroke="#666" strokeWidth="1.500" /><path d="M11 3C7 0 4 2 2.500 5M.5 1v5h5" stroke="#4a7ebb" strokeWidth="1.800" /></svg>}
      />
      {rule}
      <MenuItem text="字体" k="F" tail="..." icon={<b className="mr-1 text-[13px] text-[#555]">A</b>} />
      {rule}
      <MenuItem
        text="更改图表类型" k="Y" tail="..."
        icon={<svg width="15" height="14" viewBox="0 0 15 14"><path d="M0 5h4v9H0z" fill="#4a7ebb" /><path d="M5 0h4v14H5z" fill="#eec77c" /><path d="M10 3h4v11h-4z" fill="#777" /></svg>}
      />
      <MenuItem
        text="选择数据" k="E" tail="..."
        icon={<svg width="17" height="16" viewBox="0 0 17 16" fill="none"><path d="M.6 1v10.500H6M.6 4.500h12M.6 8h6M4.500 1v10.500M8.500 1v5M12.400 1v5" stroke="#777" strokeWidth="1.200" /><path d="M0 0h13v3H0z" fill="#777" /><path d="M4.500 8V4.500h4" stroke="#ed7d31" /><path d="M7.600 6.600h8.800v8.800H7.600z" fill="#fff" stroke="#777" strokeWidth="1.200" /><path d="M10 14v-2.500M12 14v-4M14 14V9" stroke="#777" /></svg>}
      />
      <MenuItem
        text="三维旋转" k="R" tail="..." state="off"
        icon={<svg width="16" height="14" viewBox="0 0 16 14" fill="none" stroke="#b3b0b3" strokeWidth="1.400"><path d="M4 3.500L6 1h6.500c1 0 1.500.500 1.500 1.500V10l-2.500 3H5C3.500 13 3 11.500 3 10V5c0-1 .5-1.500 1.500-1.500H10c1 0 1.500.500 1.500 1.500v8" /><path d="M11.500 4L13.700 1.500" /></svg>}
      />
      {rule}
      <MenuItem text="添加主要网格线" k="M" />
      <MenuItem text="添加次要网格线" k="N" />
      <MenuItem
        text="设置坐标轴格式" k="F" tail="..." state="on"
        icon={<svg width="16" height="16" viewBox="0 0 16 16"><path d="M0 6h4v7H0zM5 0h4v9l-4 3z" fill="#999" /><path d="M15 3v4l-4.500 4-2-2z" fill="#777" /><path d="M8 9.500l2.500 2C10 15 7 15.500 2.500 15.500 5 14 4.500 10 8 9.500z" fill="#4a7ebb" /><circle cx="7.500" cy="11.800" r="1" fill="#fff" /></svg>}
      />
    </div>
  )
}

function SheetTabs() {
  const pad = 'my-[3px] pb-[6px] pl-[11px] pr-3'
  const tab = `${pad} border-r border-[#a6a6a6]`
  return (
    <div className="flex h-[28px] shrink-0 border-t border-[#a6a6a6] bg-[#e6e6e6] text-[13px] leading-[16px] text-[#444]">
      <div className="my-[3px] flex w-[101px] items-center gap-[25px] border-r border-[#a6a6a6] pl-[27px]">
        <svg width="4" height="7" viewBox="0 0 4 7"><path d="M4 0v7L0 3.500z" fill="#bbb" /></svg>
        <svg width="4" height="7" viewBox="0 0 4 7"><path d="M0 0v7l4-3.500z" fill="#bbb" /></svg>
      </div>
      <button className={tab}>成绩表</button>
      <button className={tab}>员工信息</button>
      <button className={pad}>田字格</button>
      <button className="-mt-px mb-[2px] border-x border-b-2 border-x-[#a6a6a6] border-b-[#217346] bg-linear-to-b from-white from-30% to-[#dcebf7] px-[13px] pb-px font-medium text-[#217346]">XXX公司销售额</button>
      <button className="mb-1 ml-[3px] mt-[2px] bg-[#f4b084] px-[10px] pb-px font-medium text-[#222]">课程表</button>
      <span className="my-[3px] ml-[2px] w-px bg-[#a6a6a6]" />
      <button className={tab}>Sheet5</button>
      <button aria-label="新工作表" className="ml-[33px] pb-px">
        <svg width="17" height="17" viewBox="0 0 17 17" fill="none" stroke="#777"><circle cx="8.500" cy="8.500" r="7.500" /><path d="M8.500 4.500v8M4.500 8.500h8" strokeWidth="1.800" /></svg>
      </button>
      <div className="ml-auto flex w-[521px] items-center">
        <span className="mr-[14px] flex flex-col gap-[3px]">
          <i className="size-[2px] bg-[#aaa]" /><i className="size-[2px] bg-[#aaa]" /><i className="size-[2px] bg-[#aaa]" />
        </span>
        <button aria-label="向左滚动" className="flex h-[15px] w-[16px] items-center justify-center border border-[#a6a6a6] bg-white">
          <svg width="4" height="7" viewBox="0 0 4 7"><path d="M4 0v7L0 3.500z" fill="#666" /></svg>
        </button>
        <div className="h-[15px] flex-1 bg-[#d9d9d9]"><div className="-ml-px h-[15px] w-[174px] border border-[#a6a6a6] bg-white" /></div>
      </div>
    </div>
  )
}

function VerticalScroll() {
  return (
    <div className="flex w-[21px] shrink-0 flex-col pl-[3px] pr-[3px] pt-[2px]">
      <button aria-label="向上滚动" className="flex h-[15px] items-center justify-center border border-[#a6a6a6] bg-white">
        <svg width="7" height="4" viewBox="0 0 7 4"><path d="M0 4h7L3.500 0z" fill="#666" /></svg>
      </button>
      <div className="flex-1 bg-[#d9d9d9] pt-[236px]"><div className="h-[285px] border border-[#a6a6a6] bg-white" /></div>
    </div>
  )
}

/* ---------- format pane ---------- */

function Radio({ name, text, k, checked, onPick, h }: { name: string; text: string; k: string; checked: boolean; onPick: () => void; h: string }) {
  return (
    <label className={`flex items-center gap-[5px] pl-[46px] ${h}`}>
      <input
        type="radio" name={name} checked={checked} onChange={onPick}
        className="size-3 appearance-none rounded-full border border-[#ababab] bg-white checked:bg-[radial-gradient(circle,#666_3px,#fff_4px)]"
      />
      <span>{text}(<u>{k}</u>)</span>
    </label>
  )
}

function FormatPane() {
  const [type, setType] = useState('Y')
  const [cross, setCross] = useState('O')
  const [pos, setPos] = useState('W')
  const closed = (
    <svg width="6" height="9" viewBox="0 0 6 9" className="ml-[22px] mr-[7px]"><path d="M.5.800l4.300 3.700L.5 8.200z" fill="#fff" stroke="#888" /></svg>
  )
  return (
    <aside className="mt-[2px] w-[281px] shrink-0 border-l border-[#c3c3c3] text-[#444]">
      <div className="flex h-[38px] items-end pl-[13px] pr-[9px]">
        <h2 className="flex-1 text-[21px] leading-[28px] text-[#217346]">设置坐标轴格式</h2>
        <svg width="9" height="5" viewBox="0 0 9 5" className="mb-[15px] mr-[8px]"><path d="M0 0h9L4.500 5z" fill="#666" /></svg>
        <button aria-label="关闭窗格" className="mb-[12px]"><svg width="10" height="10" viewBox="0 0 10 10" stroke="#666" strokeWidth="1.800"><path d="M.7.700l8.600 8.600M9.300.700L.7 9.300" /></svg></button>
      </div>
      <div className="flex h-[22px] items-center pl-[18px]">
        <button className="font-bold text-[#217346]">坐标轴选项</button>
        <svg width="10" height="6" viewBox="0 0 10 6" className="ml-[6px]"><path d="M0 0h10L5 6z" fill="#666" /></svg>
        <span className="ml-[12px] mr-[5px] h-[13px] w-px bg-[#dadada]" />
        <button>文本选项</button>
      </div>
      <div className="flex h-[44px] items-center pl-[18px] pt-px">
        <button aria-label="填充与线条"><PaneBucket /></button>
        <button aria-label="效果" className="ml-[17px] pt-[2px]">
          <svg width="22" height="24" viewBox="0 0 22 24"><path d="M11 1l10 7.500L17.500 19h-13L1 8.500z" fill="#fff" stroke="#777" strokeWidth="1.200" /><path d="M4.500 19h13" stroke="#777" strokeWidth="2" /><path d="M4 21h14v3H4z" fill="#f1f1f1" /></svg>
        </button>
        <button aria-label="大小与属性" className="ml-[18px]">
          <svg width="21" height="21" viewBox="0 0 21 21" fill="none"><path d="M7 2.500h13M6.500 0v5M20.500 0v5M2.500 7v13M0 6.500h5M0 20.500h5" stroke="#777" strokeWidth="1.200" /><path d="M6 6h15v15H6z" fill="#777" /><path d="M13.500 8v3.500M13.500 15.500V19M8 13.500h3.500M15.500 13.500H19M12 9.500l1.500-1.500 1.500 1.500M12 17.500l1.500 1.500 1.500-1.500M9.500 12L8 13.500 9.500 15M17.500 12l1.500 1.500-1.500 1.500" stroke="#fff" /></svg>
        </button>
        <button aria-label="坐标轴选项" className="ml-[20px]">
          <svg width="20" height="21" viewBox="0 0 20 21" fill="#217346"><path d="M0 6h6v15H0zM7 0h6v21H7zM14 3h6v18h-6z" /></svg>
        </button>
      </div>
      <div className="ml-[13px] mr-[10px] flex h-[9px] items-end">
        <span className="h-px flex-1 bg-[#c6c6c6]" />
        <svg width="14" height="9" viewBox="0 0 14 9" fill="none" stroke="#c6c6c6"><path d="M0 8.500h.800L7 1l6.200 7.500h.8" /></svg>
        <span className="h-px w-[113px] bg-[#c6c6c6]" />
      </div>

      <button className="mt-[2px] flex h-[24px] items-center font-bold text-[#217346]">
        <svg width="7" height="7" viewBox="0 0 7 7" className="ml-[20px] mr-[8px]"><path d="M7 0v7H0z" fill="#444" /></svg>
        坐标轴选项
      </button>
      <p className="h-[29px] pl-[35px] leading-[22px]">坐标轴类型</p>
      <Radio name="type" text="根据数据自动选择" k="Y" checked={type === 'Y'} onPick={() => setType('Y')} h="h-[25px]" />
      <Radio name="type" text="文本坐标轴" k="T" checked={type === 'T'} onPick={() => setType('T')} h="h-[25px]" />
      <Radio name="type" text="日期坐标轴" k="X" checked={type === 'X'} onPick={() => setType('X')} h="h-[25px]" />
      <p className="h-[30px] pl-[35px] leading-[26px]">纵坐标轴交叉</p>
      <Radio name="cross" text="自动" k="O" checked={cross === 'O'} onPick={() => setCross('O')} h="h-[27px]" />
      <div className="flex h-[27px] items-center justify-between pr-[30px]">
        <Radio name="cross" text="分类编号" k="E" checked={cross === 'E'} onPick={() => setCross('E')} h="h-[27px]" />
        <input aria-label="分类编号值" disabled defaultValue="1" className="h-[25px] w-[93px] border border-[#e1e1e1] bg-[#efefed] px-[6px] text-[#999]" />
      </div>
      <Radio name="cross" text="最大分类" k="G" checked={cross === 'G'} onPick={() => setCross('G')} h="h-[28px]" />
      <p className="h-[30px] pl-[35px] leading-[24px]">坐标轴位置</p>
      <Radio name="pos" text="在刻度线上" k="K" checked={pos === 'K'} onPick={() => setPos('K')} h="h-[25px]" />
      <Radio name="pos" text="刻度线之间" k="W" checked={pos === 'W'} onPick={() => setPos('W')} h="h-[25px]" />
      <label className="flex h-[29px] items-center gap-[5px] pl-[35px]">
        <input type="checkbox" className="size-[13px] appearance-none border border-[#ababab] bg-white" />
        <span>逆序类别(<u>C</u>)</span>
      </label>
      <button className="mt-[7px] flex h-[27px] items-center font-bold">{closed}刻度线</button>
      <button className="flex h-[27px] items-center font-bold">{closed}标签</button>
      <button className="flex h-[27px] items-center font-bold">{closed}数字</button>
    </aside>
  )
}

/* ---------- annotations ---------- */

function Arrows() {
  return (
    <svg className="pointer-events-none absolute inset-0 h-full w-full" fill="#f00" stroke="#f00">
      <g className="drop-shadow-[2px_3px_2px_rgba(0,0,0,0.6)]">
        <path d="M569 552l73 184" strokeWidth="3" strokeLinecap="round" />
        <path d="M650 757l-15-21 8 1 8-6z" strokeWidth="1" />
        <path d="M1241 688l72 46" strokeWidth="3" strokeLinecap="round" />
        <path d="M1332 746l-25-10 6-2 1-7z" strokeWidth="1" />
      </g>
      <path d="M737.500 776v16l3.700-3.500 2.600 6.500 3-1.300-2.700-6.200h5z" fill="#fff" stroke="#222" strokeWidth="1" />
    </svg>
  )
}

function Watermark() {
  return (
    <div className="absolute bottom-0 right-[5px] flex h-[109px] w-[458px] bg-black">
      <div className="flex w-[183px] items-center justify-center rounded-[22px] bg-[#0066ff] pb-3 text-[84px] font-bold leading-[96px] text-white">TAG</div>
      <div className="flex flex-1 flex-col items-center whitespace-nowrap pr-[3px]">
        <span className="text-[48px] font-bold leading-[64px] text-[#f00] [text-shadow:0_0_1px_#fff,0_0_1px_#fff]">电脑技术网</span>
        <span className="font-['Liberation_Serif',serif] text-[36px] font-bold leading-[42px] text-[#0066ff] [text-shadow:0_0_1px_#fff,0_0_1px_#fff,0_0_1px_#fff]">www.tagxp.com</span>
      </div>
    </div>
  )
}

export default function App() {
  return (
    <div className="relative flex h-screen flex-col overflow-hidden bg-[#c4c4c4] font-['Open_Sans','Noto_Sans_CJK_SC',sans-serif] text-[12px]">
      <div className="ml-[2px] flex min-h-0 flex-1 flex-col border-b border-l border-[#217346] bg-[#e6e6e6]">
        <TitleBar />
        <Ribbon />
        <QuickAccess />
        <FormulaBar />
        <main className="flex min-h-0 flex-1">
          <div className="flex min-w-0 flex-1 flex-col">
            <div className="flex min-h-0 flex-1">
              <div className="relative min-w-0 flex-1 overflow-hidden">
                <Grid />
                <Chart />
                <ChartButtons />
                <MiniToolbar />
                <ContextMenu />
              </div>
              <VerticalScroll />
            </div>
            <SheetTabs />
          </div>
          <FormatPane />
        </main>
        <footer className="flex h-[22px] shrink-0 items-center border-t border-[#c6c6c6] bg-[#f1f1f1] pb-[2px] pl-[7px] text-[#444]">
          <span>就绪</span>
          <span className="ml-[19px]">数字</span>
          <svg width="13" height="13" viewBox="0 0 13 13" fill="none" className="ml-[17px]"><path d="M1.500 6v6.500h11V1.500H7" stroke="#888" /><path d="M7 1h6v3H7z" fill="#777" /><circle cx="3" cy="3" r="2.600" fill="#777" /><path d="M3 7.500h8M3 10h8" stroke="#888" strokeDasharray="2 1" /></svg>
        </footer>
      </div>
      <div className="h-px shrink-0 bg-[#1f2f3f]" />
      <Watermark />
      <Arrows />
    </div>
  )
}
